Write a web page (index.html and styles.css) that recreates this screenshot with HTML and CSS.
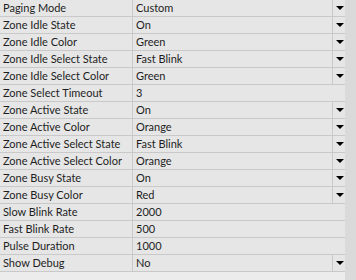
FILE: index.html
```html
<!DOCTYPE html>
<html lang="en">
<head>
  <meta charset="UTF-8">
  <title>Properties</title>
  <link rel="stylesheet" href="styles.css">
</head>
<body>
  <div class="panel">
    <div class="grid">
      <div class="row"><div class="name">Paging Mode</div><div class="value">Custom</div><div class="drop"><span class="arrow"></span></div></div>
      <div class="row"><div class="name">Zone Idle State</div><div class="value">On</div><div class="drop"><span class="arrow"></span></div></div>
      <div class="row"><div class="name">Zone Idle Color</div><div class="value">Green</div><div class="drop"><span class="arrow"></span></div></div>
      <div class="row"><div class="name">Zone Idle Select State</div><div class="value">Fast Blink</div><div class="drop"><span class="arrow"></span></div></div>
      <div class="row"><div class="name">Zone Idle Select Color</div><div class="value">Green</div><div class="drop"><span class="arrow"></span></div></div>
      <div class="row"><div class="name">Zone Select Timeout</div><div class="value">3</div><div></div></div>
      <div class="row"><div class="name">Zone Active State</div><div class="value">On</div><div class="drop"><span class="arrow"></span></div></div>
      <div class="row"><div class="name">Zone Active Color</div><div class="value">Orange</div><div class="drop"><span class="arrow"></span></div></div>
      <div class="row"><div class="name">Zone Active Select State</div><div class="value">Fast Blink</div><div class="drop"><span class="arrow"></span></div></div>
      <div class="row"><div class="name">Zone Active Select Color</div><div class="value">Orange</div><div class="drop"><span class="arrow"></span></div></div>
      <div class="row"><div class="name">Zone Busy State</div><div class="value">On</div><div class="drop"><span class="arrow"></span></div></div>
      <div class="row"><div class="name">Zone Busy Color</div><div class="value">Red</div><div class="drop"><span class="arrow"></span></div></div>
      <div class="row"><div class="name">Slow Blink Rate</div><div class="value">2000</div><div></div></div>
      <div class="row"><div class="name">Fast Blink Rate</div><div class="value">500</div><div></div></div>
      <div class="row"><div class="name">Pulse Duration</div><div class="value">1000</div><div></div></div>
      <div class="row"><div class="name">Show Debug</div><div class="value">No</div><div class="drop"><span class="arrow"></span></div></div>
    </div>
    <div class="scroll"></div>
  </div>
</body>
</html>
```

FILE: styles.css
```css
body {
  margin: 0;
  background-color: #ececec;
  font-family: Lato, "Noto Sans", sans-serif;
  font-size: 11px;
  color: #1e1e1e;
}
.panel {
  display: flex;
  width: 356px;
  height: 280px;
}
.grid {
  width: 345px;
  align-self: flex-start;
  background-color: #e6e6e6;
}
.row {
  display: grid;
  grid-template-columns: 133px 199px 13px;
  height: 16px;
  border-bottom: 1px solid #c9c9c9;
  line-height: 16px;
}
.name {
  padding-left: 3px;
  border-right: 1px solid #c9c9c9;
  white-space: nowrap;
  overflow: hidden;
}
.value {
  padding-left: 3px;
  white-space: nowrap;
}
.drop {
  border-left: 1px solid #c9c9c9;
  display: flex;
  justify-content: center;
  align-items: center;
}
.arrow {
  width: 0;
  height: 0;
  border-left: 4px solid transparent;
  border-right: 4px solid transparent;
  border-top: 4px solid #000;
  margin-left: 2px;
}
.scroll {
  flex: 1;
  background-color: #dadada;
}
```
